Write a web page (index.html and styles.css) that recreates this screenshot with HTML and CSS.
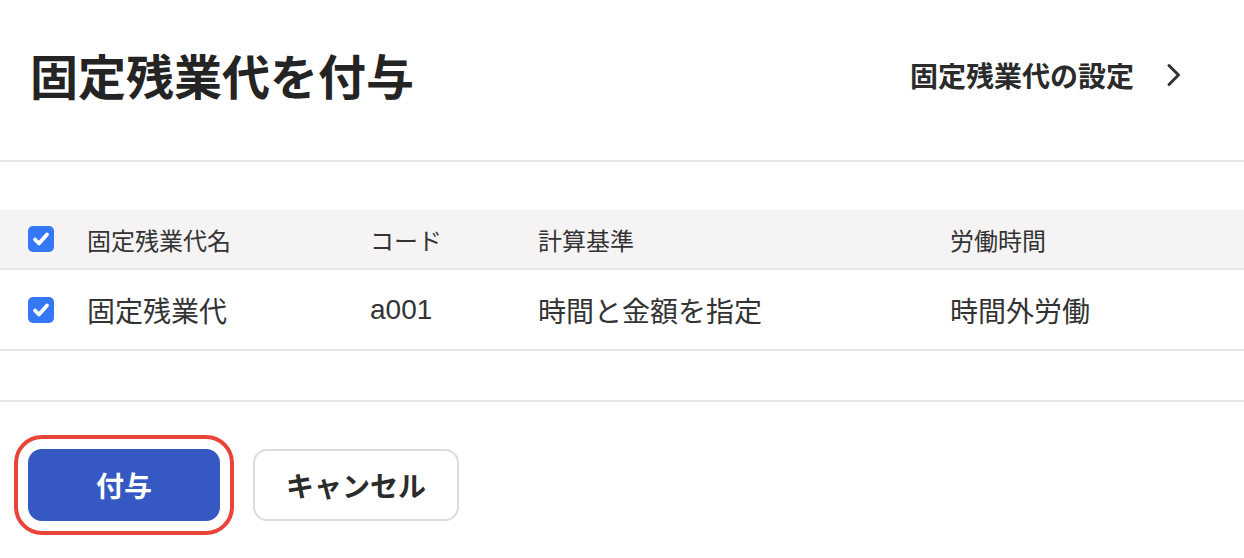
FILE: index.html
```html
<!DOCTYPE html>
<html lang="ja">
<head>
<meta charset="utf-8">
<title>固定残業代を付与</title>
<link rel="stylesheet" href="styles.css">
</head>
<body>
<div class="dialog">
  <header class="dialog-header">
    <h1 class="dialog-title">固定残業代を付与</h1>
    <a class="settings-link" href="#">
      <span>固定残業代の設定</span>
      <svg class="chevron" viewBox="0 0 16 24" width="16" height="24" aria-hidden="true">
        <path d="M3 2.5 L12.5 12 L3 21.5" fill="none" stroke="#333" stroke-width="3" stroke-linecap="round" stroke-linejoin="round"/>
      </svg>
    </a>
  </header>

  <section class="table-wrap">
    <div class="row row-head">
      <span class="check" aria-checked="true">
        <svg viewBox="0 0 26 26" width="26" height="26"><path d="M7 13.5 L11 17.5 L19 8.5" fill="none" stroke="#fff" stroke-width="3.8" stroke-linecap="round" stroke-linejoin="round"/></svg>
      </span>
      <span class="cell">固定残業代名</span>
      <span class="cell">コード</span>
      <span class="cell">計算基準</span>
      <span class="cell">労働時間</span>
    </div>
    <div class="row row-body">
      <span class="check" aria-checked="true">
        <svg viewBox="0 0 26 26" width="26" height="26"><path d="M7 13.5 L11 17.5 L19 8.5" fill="none" stroke="#fff" stroke-width="3.8" stroke-linecap="round" stroke-linejoin="round"/></svg>
      </span>
      <span class="cell">固定残業代</span>
      <span class="cell cell-code">a001</span>
      <span class="cell">時間と金額を指定</span>
      <span class="cell">時間外労働</span>
    </div>
  </section>

  <footer class="dialog-footer">
    <button class="btn btn-primary" type="button">付与</button>
    <button class="btn btn-secondary" type="button">キャンセル</button>
  </footer>
</div>
</body>
</html>
```

FILE: styles.css
```css
* {
  box-sizing: border-box;
}

html, body {
  margin: 0;
  padding: 0;
  background: #fff;
}

body {
  font-family: "Noto Sans CJK JP", "Noto Sans", sans-serif;
  color: #333;
  min-height: 558px;
}

.dialog {
  width: 1244px;
  padding-bottom: 36px;
}

/* Title bar */
.dialog-header {
  height: 162px;
  padding: 40px 62px 0 30px;
  display: flex;
  align-items: flex-start;
  justify-content: space-between;
  border-bottom: 2px solid #e6e6e6;
}

.dialog-title {
  margin: 0;
  font-size: 48px;
  line-height: 68px;
  font-weight: 700;
  color: #242424;
  letter-spacing: 0;
}

.settings-link {
  display: flex;
  align-items: center;
  gap: 32px;
  margin-top: 15px;
  font-size: 28px;
  line-height: 40px;
  font-weight: 700;
  color: #2b2b2b;
  text-decoration: none;
}

.chevron {
  display: block;
}

/* Table */
.table-wrap {
  margin-top: 48px;
}

.row {
  display: grid;
  grid-template-columns: 59px 283px 168px 412px 1fr;
  align-items: center;
  padding-left: 28px;
  border-bottom: 2px solid #e6e6e6;
}

.row-head {
  height: 60px;
  background: #f5f3f4;
  font-size: 24px;
  color: #333;
}

.row-body {
  height: 81px;
  font-size: 28px;
  color: #333;
}

.cell {
  white-space: nowrap;
}

.cell-code {
  font-family: "Liberation Sans", "Noto Sans", sans-serif;
  font-size: 28px;
}

.check {
  width: 26px;
  height: 26px;
  border-radius: 5px;
  background: #3478f6;
  display: block;
}

.check svg {
  display: block;
}

/* Actions */
.dialog-footer {
  margin-top: 49px;
  border-top: 2px solid #e6e6e6;
  padding: 47px 0 0 28px;
  display: flex;
  gap: 33px;
}

.btn {
  height: 72px;
  border-radius: 14px;
  font-family: "Noto Sans CJK JP", "Noto Sans", sans-serif;
  font-size: 28px;
  font-weight: 700;
  cursor: pointer;
  padding: 0;
}

.btn-primary {
  width: 192px;
  background: #3558c3;
  color: #fff;
  border: none;
  outline: 4px solid #e8443a;
  outline-offset: 10px;
}

.btn-secondary {
  width: 206px;
  background: #fff;
  color: #2b2b2b;
  border: 2px solid #dcdcdc;
}
```
